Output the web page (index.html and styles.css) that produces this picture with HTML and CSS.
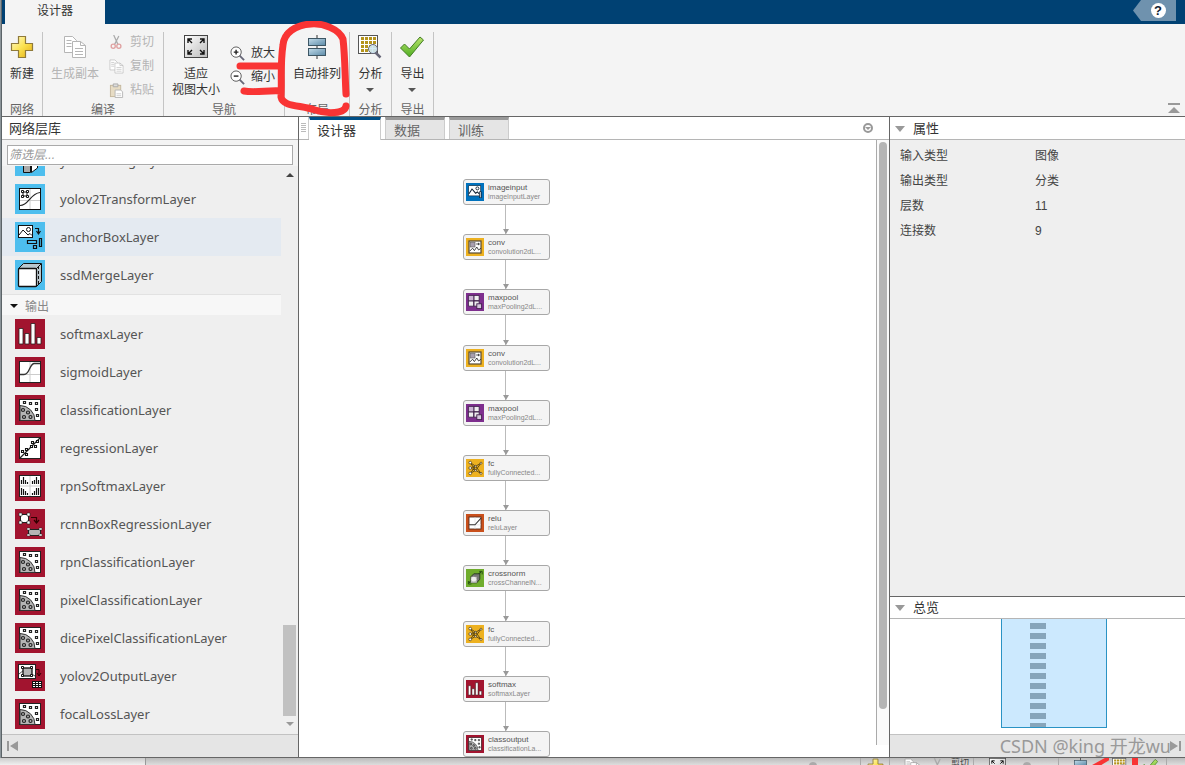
FILE: index.html
```html
<!DOCTYPE html>
<html lang="zh-CN">
<head>
<meta charset="utf-8">
<title>设计器</title>
<link rel="stylesheet" href="styles.css">
</head>
<body>
<svg class="defs" aria-hidden="true">
  <defs>
    <linearGradient id="gold" x1="0" y1="0" x2="1" y2="1"><stop offset="0" stop-color="#fffbd0"/><stop offset=".5" stop-color="#fbe250"/><stop offset="1" stop-color="#e3ac10"/></linearGradient>
    <linearGradient id="green" x1="0" y1="0" x2="0" y2="1"><stop offset="0" stop-color="#b9e36b"/><stop offset="1" stop-color="#4fae22"/></linearGradient>
    <linearGradient id="steel" x1="0" y1="0" x2="1" y2="1"><stop offset="0" stop-color="#c3dcea"/><stop offset="1" stop-color="#5b8aa8"/></linearGradient>
    <linearGradient id="silver" x1="0" y1="0" x2="1" y2="1"><stop offset="0" stop-color="#fff"/><stop offset="1" stop-color="#bbb"/></linearGradient>
    <symbol id="i-plus" viewBox="0 0 24 24"><path d="M8.500 1.500h7v7h7v7h-7v7h-7v-7h-7v-7h7z" fill="url(#gold)" stroke="#8f7a3a" stroke-width="1.200"/></symbol>
    <symbol id="i-copy" viewBox="0 0 24 24"><g fill="#fff" stroke="currentColor"><path d="M1.500 1.500h8l4 4v12h-12z"/><path d="M3.500 5.500h5M3.500 8.500h5M3.500 11.500h5"/><path d="M9.500 6.500h8l5 4v12h-13z"/><path d="M17.500 6.500v4h5M12 13.500h8M12 16.500h8M12 19.500h8" fill="none"/></g></symbol>
    <symbol id="i-cut" viewBox="0 0 16 16"><path d="M5 0l4.500 10M10.500 1L6 10" stroke="#aaa" stroke-width="1.300" fill="none"/><circle cx="4.500" cy="12" r="2.200" fill="none" stroke="#dfa0a0" stroke-width="1.400"/><circle cx="10.500" cy="12" r="2.200" fill="none" stroke="#dfa0a0" stroke-width="1.400"/></symbol>
    <symbol id="i-paste" viewBox="0 0 16 16"><rect x="1.500" y="2.500" width="11" height="12" fill="#e7dcc4" stroke="#c4b79c"/><path d="M4.500 1h5v3h-5z" fill="#ddd" stroke="#aaa"/><path d="M6.500 7.500h6l2 2v6h-8z" fill="#fff" stroke="#b5b5b5"/><path d="M8 11.500h5M8 13.500h5" stroke="#ccc"/></symbol>
    <symbol id="i-fit" viewBox="0 0 24 24"><rect x=".5" y=".5" width="23" height="22" fill="url(#silver)" stroke="#444"/><path d="M4 8V4h4M4 4l4 4M16 4h4v4M20 4l-4 4M4 15v4h4M4 19l4-4M20 15v4h-4M20 19l-4-4" fill="none" stroke="#111" stroke-width="1.400"/></symbol>
    <symbol id="i-zin" viewBox="0 0 16 16"><path d="M10 10l5 5" stroke="#667" stroke-width="2"/><circle cx="6.500" cy="6.500" r="5.500" fill="#fff" stroke="#555"/><path d="M4 6.500h5M6.500 4v5" stroke="#222" stroke-width="1.500"/></symbol>
    <symbol id="i-zout" viewBox="0 0 16 16"><path d="M10 10l5 5" stroke="#667" stroke-width="2"/><circle cx="6.500" cy="6.500" r="5.500" fill="#fff" stroke="#555"/><path d="M4 6.500h5" stroke="#222" stroke-width="1.500"/></symbol>
    <symbol id="i-arrange" viewBox="0 0 24 24"><path d="M12 0v24" stroke="#333"/><rect x="3.500" y="3.500" width="17" height="7" fill="url(#steel)" stroke="#3d5664"/><rect x="3.500" y="13.500" width="17" height="7" fill="url(#steel)" stroke="#3d5664"/></symbol>
    <symbol id="i-analyze" viewBox="0 0 24 24"><rect x=".5" y=".5" width="19" height="18" fill="#fff" stroke="#555"/><path d="M3 3.500h15M3 7.500h15M3 11.500h15M3 15.500h15" stroke="#b5941c" stroke-width="3" stroke-dasharray="3 1"/><path d="M17 17l5.500 5.500" stroke="#667" stroke-width="2.500"/><circle cx="15" cy="14" r="4.500" fill="#cfe8f5" fill-opacity=".9" stroke="#667"/></symbol>
    <symbol id="i-check" viewBox="0 0 24 24"><path d="M.5 13L4.500 9l5 5L20 2l3.500 3L9.500 22z" fill="url(#green)" stroke="#437d24"/></symbol>

    <symbol id="g-class" viewBox="0 0 30 30"><rect x="4.500" y="4.500" width="21" height="21" fill="#fff" stroke="#222"/><path d="M5 10.500a15 15 0 0 1 15 15H5z" fill="#b5b5b5" stroke="#333"/><g fill="none" stroke="#222" stroke-width="1.200"><circle cx="8" cy="15" r="1.500"/><circle cx="13" cy="17.500" r="1.500"/><circle cx="9" cy="22" r="1.500"/><circle cx="15.500" cy="22" r="1.500"/><path d="M8.500 6.500h2v2h-2zM14.500 7.500h2v2h-2zM20.500 7.500h2v2h-2zM20.500 13.500h2v2h-2zM21.500 19.500h2v2h-2z"/></g></symbol>
    <symbol id="g-softmax" viewBox="0 0 30 30"><path d="M4 9.500h4v15.500h-4zM10 14.500h4v10.500h-4zM16 4.500h4v20.500h-4zM22 18.500h4v6.500h-4z" fill="#fff" stroke="#2b2020" stroke-width=".8"/></symbol>
    <symbol id="g-sigmoid" viewBox="0 0 30 30"><rect x="4.500" y="4.500" width="21" height="21" fill="#fff" stroke="#222"/><path d="M15 5v20M5 17.500h20" stroke="#ccc"/><path d="M5 17.500h4c6 0 5-10 10-11h6" fill="none" stroke="#333" stroke-width="1.300"/></symbol>
    <symbol id="g-regress" viewBox="0 0 30 30"><rect x="4.500" y="4.500" width="21" height="21" fill="#fff" stroke="#222"/><path d="M5 25L25 5" stroke="#222" stroke-width="1.300"/><path d="M6.500 17.500h2v2h-2zM10.500 15.500h2v2h-2zM10.500 20.500h2v2h-2zM15.500 12.500h2v2h-2zM16.500 8.500h2v2h-2zM19.500 12.500h2v2h-2zM21.500 7.500h2v2h-2z" fill="#fff" stroke="#111" stroke-width="1.100"/></symbol>
    <symbol id="g-rpn" viewBox="0 0 30 30"><rect x="4.500" y="4.500" width="21" height="21" fill="#fff" stroke="#222"/><path d="M15 5v20M5 15h20" stroke="#ccc"/><path d="M6.500 9v4M8.500 6v7M10.500 9v4M12.500 11v2M17.500 10v3M19.500 9v4M21.500 6v7M23.500 9v4M6.500 17v7M8.500 18v6M10.500 20v4M12.500 22v2M17.500 22v2M19.500 20v4M21.500 17v7M23.500 17v7" stroke="#111" stroke-width="1.200"/></symbol>
    <symbol id="g-rcnn" viewBox="0 0 30 30"><rect x="5.500" y="5.500" width="8" height="8" fill="#fff" stroke="#222"/><path d="M4 4h3v3H4zM12 4h3v3h-3zM4 12h3v3H4zM12 12h3v3h-3z" fill="#fff" stroke="#222" stroke-width=".6"/><path d="M16 8.500h5.500v5M19 11l2.500 3 2.500-3" fill="none" stroke="#300" stroke-width="1.200"/><rect x="13.500" y="20.500" width="12" height="6" fill="#b5b5b5" stroke="#222"/><path d="M12 19h3v2h-3zM24 19h3v2h-3zM12 25h3v2h-3zM24 25h3v2h-3z" fill="#fff" stroke="#222" stroke-width=".5"/></symbol>
    <symbol id="g-yoloout" viewBox="0 0 30 30"><rect x="3.500" y="3.500" width="17" height="14" fill="#fff" stroke="#222"/><path d="M4 13l5-4 6 3 5 3" stroke="#555" fill="none"/><rect x="8" y="7" width="9" height="8" fill="#b5b5b5" stroke="#111" stroke-width="1.300"/><path d="M6.500 5.500h2v2h-2zM15.500 5.500h2v2h-2zM6.500 13.500h2v2h-2zM15.500 13.500h2v2h-2z" fill="#fff" stroke="#111"/><path d="M21 8.500h3v6M22 12l2 3 2-3" fill="none" stroke="#300"/><rect x="17.500" y="20.500" width="9" height="6" fill="#fff" stroke="#111"/><path d="M20.500 20v7M23.500 20v7M17 22.500h10M17 24.500h10" stroke="#111"/></symbol>
    <symbol id="g-transform" viewBox="0 0 30 30"><rect x="4.500" y="4.500" width="21" height="21" fill="#fff" stroke="#111"/><path d="M15 5v20M5 16.500h20" stroke="#ccc"/><path d="M5 21.500c9 0 10-12 20-13" fill="none" stroke="#222" stroke-width="1.200"/><path d="M8 8h4v4H8z" fill="none" stroke="#111"/><path d="M6.500 6.500h2v2h-2zM11.500 6.500h2v2h-2zM6.500 11.500h2v2h-2zM11.500 11.500h2v2h-2z" fill="#fff" stroke="#111"/></symbol>
    <symbol id="g-anchor" viewBox="0 0 30 30"><rect x="3.500" y="3.500" width="14" height="12" fill="#fff" stroke="#111"/><path d="M4 13l4-5 5 5 2-1.500 2 2" fill="none" stroke="#111"/><circle cx="13.500" cy="7.500" r="2" fill="none" stroke="#111"/><path d="M20 6.500h3.500v5M21.500 9l2 3 2-3" fill="none" stroke="#111" stroke-width="1.200"/><path d="M12.500 18.500h9v3h-9zM24.500 16.500h2v8h-2zM18.500 23.500h3v3h-3z" fill="#4dbeee" stroke="#111" stroke-width="1.200"/></symbol>
    <symbol id="g-cube" viewBox="0 0 30 30"><path d="M3.500 8.500l5-5h18v18l-5 5z" fill="#b9c7ce" stroke="#111"/><path d="M23.500 6v18" stroke="#111" stroke-dasharray="3 2"/><path d="M21 9l5-5" stroke="#111"/><rect x="3.500" y="8.500" width="18" height="18" rx="1" fill="#fff" stroke="#111" stroke-width="1.300"/></symbol>
    <symbol id="g-reorg" viewBox="0 0 30 30"><path d="M8.500 19.500h7v7h-7z" fill="#a9a9a9" stroke="#111"/><path d="M16.500 20l6-6v8l-6 4.500z" fill="#fff" stroke="#111"/><path d="M4 5h10v8H4z" fill="#fff" stroke="#111"/></symbol>
    <symbol id="g-image" viewBox="0 0 30 30"><rect x="4.500" y="4.500" width="20" height="17" fill="#fff" stroke="#123"/><path d="M5 18l5-8 6 7 3-2 3 3" fill="none" stroke="#123" stroke-width="1.700"/><circle cx="19" cy="9" r="2.500" fill="none" stroke="#123" stroke-width="1.500"/><path d="M24 14v11" stroke="#123" stroke-width="4"/><path d="M24 15v9" stroke="#ddd" stroke-width="1.500"/></symbol>
    <symbol id="g-conv" viewBox="0 0 30 30"><rect x="5" y="5" width="20" height="20" fill="#fff" stroke="#554a38" stroke-width="2"/><path d="M6 22l5-5 3 4 4-6 3 5 4-3" fill="none" stroke="#333" stroke-width="1.500"/><rect x="7" y="7" width="8" height="8" fill="#a99fb0" stroke="#666" stroke-width="1.200"/><path d="M17 10h6M21 8v4" stroke="#333" stroke-width="1.500"/></symbol>
    <symbol id="g-pool" viewBox="0 0 30 30"><path d="M4 4h9v9H4zM13 4h9v9h-9zM4 13h9v9H4zM13 13h9v9h-9z" fill="#eee" stroke="#40204c" stroke-width="1.500"/><path d="M5 5h7v7H5z" fill="#cbb5d4"/><rect x="18" y="18" width="8" height="8" fill="#d6c7dd" stroke="#40204c" stroke-width="1.500"/></symbol>
    <symbol id="g-fc" viewBox="0 0 30 30"><path d="M7 6l9 6 9-5M7 6l9 13 9 5M7 15l9-3 9 12M7 15l9 4 9-12M7 24l9-12M7 24l9-5" fill="none" stroke="#4b3b12" stroke-width="1.400"/><g fill="#fff" stroke="#4b3b12" stroke-width="1.200"><circle cx="7" cy="6" r="2.300"/><circle cx="7" cy="15" r="2.300"/><circle cx="7" cy="24" r="2.300"/><circle cx="16" cy="12" r="1.500"/><circle cx="16" cy="19" r="1.500"/><circle cx="25" cy="7" r="1.700"/><circle cx="25" cy="24" r="1.700"/></g></symbol>
    <symbol id="g-relu" viewBox="0 0 30 30"><rect x="5" y="5" width="20" height="20" fill="#fff" stroke="#5a2d1c" stroke-width="1.500"/><path d="M15 5v20M5 18h20" stroke="#ddd"/><path d="M5 18h10L25 7" fill="none" stroke="#333" stroke-width="1.700"/></symbol>
    <symbol id="g-norm" viewBox="0 0 30 30"><path d="M5 23L25 5" stroke="#234a10" stroke-width="2"/><path d="M8 13l5-5h10v9l-5 6H8z" fill="#777" stroke="#263b1c" stroke-width="1.500"/><path d="M8 13h10v10H8z" fill="#bdbdbd"/><circle cx="13" cy="17" r="4" fill="#eee"/><path d="M22 4h5v5M4 20v5h5" fill="none" stroke="#234a10" stroke-width="1.500"/></symbol>
  </defs>
</svg>

<div class="screen">
  <div class="app">
    <header class="titlebar">
      <button class="app-tab">设计器</button>
      <button class="help" aria-label="帮助"><span>?</span></button>
    </header>

    <div class="toolbar">
      <section class="group g-new">
        <div class="tools"><button class="big"><svg><use href="#i-plus"/></svg><span>新建</span></button></div>
        <div class="caption">网络</div>
      </section>
      <section class="group g-edit">
        <div class="tools">
          <button class="big" disabled><svg><use href="#i-copy"/></svg><span>生成副本</span></button>
          <div class="small-tools">
            <button disabled><svg><use href="#i-cut"/></svg>剪切</button>
            <button disabled><svg><use href="#i-copy"/></svg>复制</button>
            <button disabled><svg><use href="#i-paste"/></svg>粘贴</button>
          </div>
        </div>
        <div class="caption">编译</div>
      </section>
      <section class="group g-nav">
        <div class="tools">
          <button class="big"><svg><use href="#i-fit"/></svg><span>适应<br>视图大小</span></button>
          <div class="small-tools zoom-tools">
            <button><svg><use href="#i-zin"/></svg>放大</button>
            <button><svg><use href="#i-zout"/></svg>缩小</button>
          </div>
        </div>
        <div class="caption">导航</div>
      </section>
      <section class="group g-layout">
        <div class="tools"><button class="big"><svg><use href="#i-arrange"/></svg><span>自动排列</span></button></div>
        <div class="caption">布局</div>
      </section>
      <section class="group g-drop">
        <div class="tools"><button class="big"><svg><use href="#i-analyze"/></svg><span>分析</span><i class="tri"></i></button></div>
        <div class="caption">分析</div>
      </section>
      <section class="group g-drop">
        <div class="tools"><button class="big"><svg><use href="#i-check"/></svg><span>导出</span><i class="tri"></i></button></div>
        <div class="caption">导出</div>
      </section>
      <button class="collapse" aria-label="折叠工具栏"></button>
      <svg class="marker" viewBox="0 0 120 100" aria-hidden="true"><path d="M111 73C110 55 110 35 108 18C104 8 88 2 76 3C60 4 49 12 48 24C45 44 47 60 46 76C48 86 66 84 80 89C92 93 110 93 111 85M5 45H46M9 70C20 72 34 69 46 70"/></svg>
    </div>

    <main class="work">
      <aside class="library">
        <h2 class="panel-title">网络层库</h2>
        <div class="search"><input type="text" placeholder="筛选层..." aria-label="筛选层"></div>
        <div class="list-area">
          <ul class="layers">
            <li><svg class="blue"><use href="#g-reorg"/></svg>yolov2ReorgLayer</li>
            <li><svg class="blue"><use href="#g-transform"/></svg>yolov2TransformLayer</li>
            <li class="hover"><svg class="blue"><use href="#g-anchor"/></svg>anchorBoxLayer</li>
            <li><svg class="blue"><use href="#g-cube"/></svg>ssdMergeLayer</li>
            <li class="category"><i class="tri"></i>输出</li>
            <li><svg class="crimson"><use href="#g-softmax"/></svg>softmaxLayer</li>
            <li><svg class="crimson"><use href="#g-sigmoid"/></svg>sigmoidLayer</li>
            <li><svg class="crimson"><use href="#g-class"/></svg>classificationLayer</li>
            <li><svg class="crimson"><use href="#g-regress"/></svg>regressionLayer</li>
            <li><svg class="crimson"><use href="#g-rpn"/></svg>rpnSoftmaxLayer</li>
            <li><svg class="crimson"><use href="#g-rcnn"/></svg>rcnnBoxRegressionLayer</li>
            <li><svg class="crimson"><use href="#g-class"/></svg>rpnClassificationLayer</li>
            <li><svg class="crimson"><use href="#g-class"/></svg>pixelClassificationLayer</li>
            <li><svg class="crimson"><use href="#g-class"/></svg>dicePixelClassificationLayer</li>
            <li><svg class="crimson"><use href="#g-yoloout"/></svg>yolov2OutputLayer</li>
            <li><svg class="crimson"><use href="#g-class"/></svg>focalLossLayer</li>
          </ul>
          <div class="scroll"><i class="tri up"></i><i class="thumb"></i><i class="tri down"></i></div>
        </div>
        <div class="foot"><button class="fold" aria-label="折叠左侧面板"><svg viewBox="0 0 12 12"><path d="M0 1h2v10H0zM11 1v10L3 6z"/></svg></button></div>
      </aside>

      <section class="center">
        <nav class="tabs">
          <span class="grip"></span>
          <button class="tab active">设计器</button>
          <button class="tab">数据</button>
          <button class="tab">训练</button>
          <button class="menu" aria-label="选项"><i class="tri"></i></button>
        </nav>
        <div class="canvas-area">
          <div class="canvas">
            <div class="node"><svg class="azure"><use href="#g-image"/></svg><p>imageinput<small>imageInputLayer</small></p></div>
            <i class="wire"></i>
            <div class="node"><svg class="amber"><use href="#g-conv"/></svg><p>conv<small>convolution2dL...</small></p></div>
            <i class="wire"></i>
            <div class="node"><svg class="purple"><use href="#g-pool"/></svg><p>maxpool<small>maxPooling2dL...</small></p></div>
            <i class="wire"></i>
            <div class="node"><svg class="amber"><use href="#g-conv"/></svg><p>conv<small>convolution2dL...</small></p></div>
            <i class="wire"></i>
            <div class="node"><svg class="purple"><use href="#g-pool"/></svg><p>maxpool<small>maxPooling2dL...</small></p></div>
            <i class="wire"></i>
            <div class="node"><svg class="amber"><use href="#g-fc"/></svg><p>fc<small>fullyConnected...</small></p></div>
            <i class="wire"></i>
            <div class="node"><svg class="rust"><use href="#g-relu"/></svg><p>relu<small>reluLayer</small></p></div>
            <i class="wire"></i>
            <div class="node"><svg class="leaf"><use href="#g-norm"/></svg><p>crossnorm<small>crossChannelN...</small></p></div>
            <i class="wire"></i>
            <div class="node"><svg class="amber"><use href="#g-fc"/></svg><p>fc<small>fullyConnected...</small></p></div>
            <i class="wire"></i>
            <div class="node"><svg class="crimson"><use href="#g-softmax"/></svg><p>softmax<small>softmaxLayer</small></p></div>
            <i class="wire"></i>
            <div class="node"><svg class="crimson"><use href="#g-class"/></svg><p>classoutput<small>classificationLa...</small></p></div>
          </div>
          <div class="canvas-scroll"><i></i></div>
        </div>
      </section>

      <aside class="side">
        <h2 class="panel-title"><i class="tri"></i>属性</h2>
        <dl class="props">
          <dt>输入类型</dt><dd>图像</dd>
          <dt>输出类型</dt><dd>分类</dd>
          <dt>层数</dt><dd>11</dd>
          <dt>连接数</dt><dd>9</dd>
        </dl>
        <h2 class="panel-title lower"><i class="tri"></i>总览</h2>
        <div class="overview"><div class="view"><i></i><i></i><i></i><i></i><i></i><i></i><i></i><i></i><i></i><i></i><i></i></div></div>
        <div class="foot right"><span class="watermark">CSDN @king 开龙wu</span><button class="fold" aria-label="折叠右侧面板"><svg viewBox="0 0 12 12"><path d="M10 1h2v10h-2zM1 1v10l8-5z"/></svg></button></div>
      </aside>
    </main>
  </div>
  <div class="behind" aria-hidden="true">
    <div class="behind-left"></div>
    <div class="behind-right">
      <em></em>
      <div class="cell first"><svg><use href="#i-plus"/></svg></div>
      <div class="cell edit"><svg class="pale"><use href="#i-copy"/></svg><svg><use href="#i-cut"/></svg><span>剪切</span></div>
      <div class="cell nav"><svg><use href="#i-fit"/></svg><em></em></div>
      <div class="cell last">
        <svg><use href="#i-arrange"/></svg>
        <svg class="stroke" viewBox="0 0 24 24"><path d="M0 10L18 0h6v3L10 12z"/></svg>
        <svg><use href="#i-analyze"/></svg>
        <b></b>
        <svg><use href="#i-check"/></svg>
      </div>
    </div>
  </div>
</div>
</body>
</html>
```
FILE: styles.css
```css
* { box-sizing: border-box; }
body {
  margin: 0;
  font: 12px/16px "Liberation Sans", "Noto Sans CJK SC", sans-serif;
  color: #444;
}
button { margin: 0; padding: 0; border: 0; background: none; font: inherit; color: inherit; }
h2, p, ul, dl, dd { margin: 0; padding: 0; font-weight: normal; }
svg { display: block; flex: none; }
.defs { position: absolute; width: 0; height: 0; }

.screen { display: flex; flex-direction: column; height: 100vh; overflow: hidden; background: #8b9499; }
.app {
  flex: 1;
  min-height: 0;
  display: flex;
  flex-direction: column;
  margin-left: 1px;
  border-left: 1px solid #5c6468;
  border-bottom: 1px solid #666;
  background: #f4f4f4;
}
.tri {
  flex: none;
  width: 0;
  height: 0;
  border: 4px solid transparent;
  border-top: 4px solid #555;
  border-bottom: 0;
}

/* title bar */
.titlebar { display: flex; justify-content: space-between; height: 24px; padding: 0 9px 0 3px; background: #004173; flex: none; }
.app-tab { width: 100px; padding-bottom: 2px; background: #f4f4f4; color: #333; }
.help { width: 43px; height: 21px; padding-left: 7px; background: #6f92ae; clip-path: polygon(8px 0, 100% 0, 100% 100%, 8px 100%, 0 50%); }
.help span { display: block; width: 15px; height: 15px; margin: 0 auto; border-radius: 50%; background: #fff; color: #123; font-size: 13px; font-weight: bold; line-height: 15px; }

/* toolbar */
.toolbar { position: relative; display: flex; flex: none; height: 93px; padding-top: 8px; border-bottom: 1px solid #666; }
.group { display: flex; flex-direction: column; border-right: 1px solid #c4c4c4; }
.g-new { width: 41px; }
.g-edit, .g-nav { width: 121px; }
.g-layout { width: 65px; }
.g-drop { width: 42px; }
.tools { display: flex; justify-content: center; height: 70px; }
.caption { height: 14px; line-height: 16px; text-align: center; color: #666; }
.big { display: flex; flex-direction: column; align-items: center; padding-top: 3px; align-self: flex-start; white-space: nowrap; color: #333; }
.big svg { width: 24px; height: 24px; margin-bottom: 7px; }
.big .tri { margin-top: 6px; }
.big:disabled, .small-tools button:disabled { color: #b5b5b5; }
.g-edit .tools, .g-nav .tools { justify-content: flex-start; padding-left: 8px; gap: 10px; }
.small-tools { display: flex; flex-direction: column; gap: 8px; padding-top: 2px; }
.small-tools button { display: flex; align-items: center; gap: 6px; height: 16px; color: #333; }
.small-tools svg { width: 15px; height: 15px; }
.zoom-tools { padding-top: 13px; }
.collapse { width: 12px; height: 10px; margin: 71px 5px 0 auto; border-top: 2px solid #999; position: relative; }
.collapse::after { content: ""; display: block; margin-top: 1px; border: 6px solid transparent; border-top: 0; border-bottom: 6px solid #999; }
.marker { position: absolute; left: 233px; top: -3px; width: 120px; height: 100px; z-index: 2; fill: none; stroke: #f93434; stroke-width: 7; stroke-linecap: round; stroke-linejoin: round; }

/* panels */
.work { flex: 1; min-height: 0; display: grid; grid-template-columns: 297px minmax(0, 1fr) 296px; }
.panel-title { display: flex; align-items: center; flex: none; height: 23px; padding: 1px 0 0 7px; border-bottom: 1px solid #b5b5b5; background: #fff; font-size: 13px; color: #333; }
.foot { display: flex; align-items: center; flex: none; height: 23px; padding: 0 5px; border-top: 1px solid #c2c2c2; background: #e5e5e5; }
.fold { display: block; }
.fold svg { width: 12px; height: 12px; fill: #999; }

.library { display: flex; flex-direction: column; min-height: 0; border-right: 1px solid #666; background: #efefef; }
.search { padding: 5px 5px 1px; background: #f4f4f4; }
.search input { display: block; width: 100%; height: 20px; padding: 0 1px; border: 1px solid #aaa; background: #fff; font: inherit; font-style: italic; }
.search input::placeholder { color: #999; opacity: 1; }
.list-area { flex: 1; min-height: 0; display: flex; padding-bottom: 1px; }
.layers { flex: 1; display: flex; flex-direction: column; justify-content: flex-end; overflow: hidden; list-style: none; font: 13px/18px "Noto Sans", sans-serif; color: #555; }
.layers li { display: flex; align-items: center; flex: none; gap: 15px; height: 38px; padding-left: 13px; }
.layers .hover { background: #e4eaf1; }
.layers svg { width: 30px; height: 30px; }
.layers .category { height: 21px; gap: 7px; padding: 1px 0 0 8px; border-top: 1px solid #e2e2e2; background: #f7f7f7; font: 12px/16px "Noto Sans CJK SC", sans-serif; color: #888; }
.category .tri { border-top-color: #111; }
.scroll { display: flex; flex-direction: column; align-items: center; width: 17px; padding: 7px 2px; }
.scroll .up { border-top: 0; border-bottom: 4px solid #444; }
.scroll .thumb { width: 13px; height: 91px; margin: auto 0 6px; background: #c1c1c1; }
.scroll .down { border-top-color: #999; }

.blue { background: #4dbeee; }
.crimson { background: #a2142f; }
.azure { background: #0072bd; }
.amber { background: #edb120; }
.purple { background: #7e2f8e; }
.rust { background: #c9501c; }
.leaf { background: #6fac2c; }

/* designer */
.center { display: flex; flex-direction: column; min-width: 0; min-height: 0; background: #fff; }
.tabs { display: flex; flex: none; height: 23px; border-bottom: 1px solid #b5b5b5; }
.grip { width: 10px; padding: 6px 2px; border-right: 1px solid #ccc; }
.grip::before { content: ""; display: block; height: 9px; background: repeating-linear-gradient(#bbb 0 1px, transparent 1px 2px); }
.tab { width: 60px; margin-right: 4px; padding: 2px 0 0 8px; border: 1px solid #ccc; border-top: 3px solid #999; border-bottom: 0; background: #e5e5e5; font-size: 13px; text-align: left; color: #666; }
.tab.active { width: 72px; height: 23px; padding-left: 7px; border-color: #004f86 #ccc #fff #fff; background: #fff; color: #333; }
.menu { width: 10px; height: 10px; margin: 6px 16px 0 auto; border: 2px solid #999; border-radius: 50%; }
.menu .tri { display: block; margin: 1px auto 0; border-width: 3px 3px 0; border-top-color: #999; }
.canvas-area { flex: 1; min-height: 0; display: flex; }
.canvas { flex: 1; display: flex; flex-direction: column; padding: 39px 0 0 164px; }
.node { display: flex; align-items: center; flex: none; gap: 4px; width: 87px; height: 26px; padding-left: 2px; border: 1px solid #a8a8a8; border-radius: 3px; background: #f4f4f4; }
.node svg { width: 18px; height: 18px; }
.node p { font-size: 8px; line-height: 9px; color: #555; white-space: nowrap; }
.node small { display: block; font-size: 7px; color: #888; }
.wire { flex: 1; display: flex; align-items: flex-end; width: 1px; margin-left: 42px; background: #bbb; }
.wire::after { content: ""; flex: none; margin-left: -2px; border: 3px solid transparent; border-top: 5px solid #999; border-bottom: 0; }
.canvas-scroll { width: 13px; margin-bottom: 12px; padding: 2px 2px 0; border-left: 1px solid #aaa; background: #fafafa; }
.canvas-scroll i { display: block; width: 8px; height: 94%; border-radius: 4px; background: #b5b5b5; }

/* properties and overview */
.side { display: flex; flex-direction: column; min-height: 0; border-left: 1px solid #666; background: #efefef; }
.side .panel-title { gap: 8px; padding-left: 5px; }
.side .tri { border-width: 6px 5px 0; border-top-color: #999; }
.props { flex: 1; display: grid; grid-template-columns: 135px 1fr; grid-auto-rows: 25px; align-content: start; padding: 4px 10px; line-height: 25px; }
.side .lower { border-top: 1px solid #666; }
.overview { display: flex; justify-content: center; flex: none; height: 115px; background: #fff; padding-left: 32px; }
.view { display: flex; flex-direction: column; gap: 4px; width: 106px; height: 109px; padding: 4px 0 0 28px; overflow: hidden; border: 1px solid #2a93c4; border-top: 0; background: #cce9fe; }
.view i { flex: none; width: 16px; height: 6px; background: #87a5ba; }
.foot.right { justify-content: flex-end; padding-right: 4px; }
.watermark { margin-right: -2px; font: 18px/22px "Noto Sans", "Noto Sans CJK SC", sans-serif; color: #999; white-space: nowrap; }

/* strip of the window underneath */
.behind { display: flex; flex: none; height: 7px; overflow: hidden; }
.behind-left { width: 146px; background: linear-gradient(#ccc, #f0f0f0); border-right: 1px solid #999; }
.behind-right { flex: 1; display: flex; justify-content: flex-end; padding-right: 18px; background: linear-gradient(#bbb, #ddd); }
.behind em { width: 8px; height: 8px; margin-top: 4px; border-radius: 50%; background: #aaa; }
.cell { display: flex; border-right: 1px solid #aaa; }
.cell svg { width: 17px; height: 17px; }
.cell span { font-size: 9px; line-height: 10px; }
.cell.first { width: 30px; margin-left: 43px; padding-left: 6px; border-left: 1px solid #aaa; }
.cell.edit { width: 84px; padding-left: 14px; gap: 8px; }
.cell.edit span { margin-left: -3px; }
.cell.nav { width: 85px; padding-left: 15px; gap: 17px; }
.cell.last { width: 108px; padding-left: 13px; gap: 3px; }
.cell .pale { color: #999; }
.cell .stroke { fill: #f93434; }
.cell b { width: 6px; background: #f93434; }
```
